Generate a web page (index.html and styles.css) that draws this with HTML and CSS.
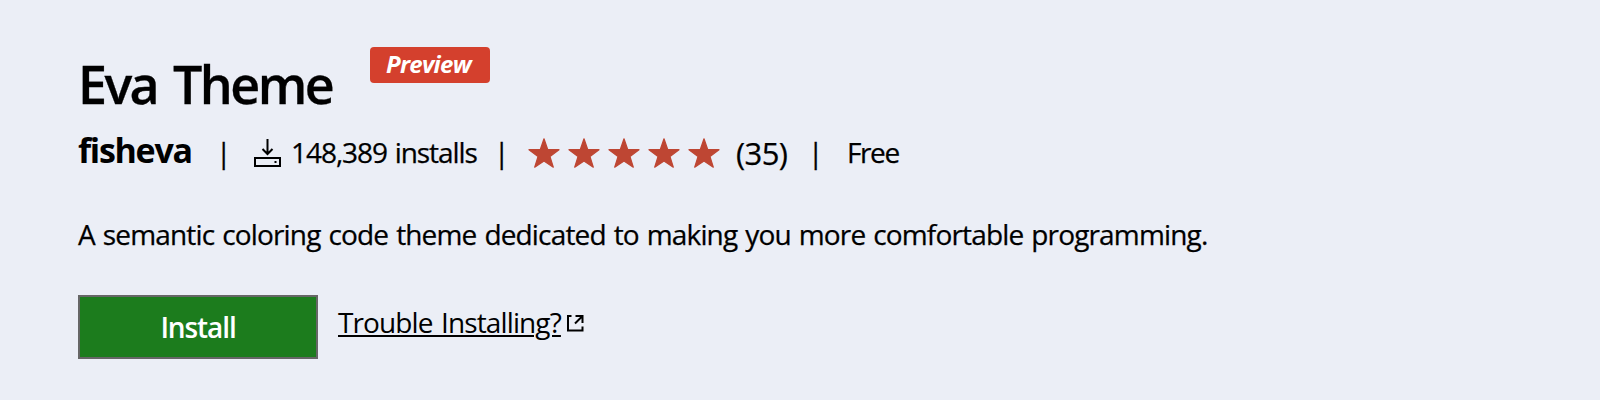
FILE: index.html
```
<!DOCTYPE html>
<html lang="en">
<head>
<meta charset="utf-8">
<title>Eva Theme</title>
<link rel="stylesheet" href="styles.css">
</head>
<body>
<svg width="0" height="0" class="defs"><symbol id="star" viewBox="0 0 32 30"><path d="M16 .8 19.7 11.5 31 11.7 22 18.6 25.3 29.2 16 22.9 6.7 29.2 10 18.6 1 11.7 12.3 11.5Z" fill="#be4633" stroke="#be4633" stroke-width="1.2" stroke-linejoin="round"/></symbol></svg>
<main class="header">
  <div class="title-row">
    <h1 class="title">Eva Theme</h1>
    <span class="badge"><span class="badge-text">Preview</span></span>
  </div>
  <div class="meta">
    <span class="publisher">fisheva</span>
    <span class="divider d1">|</span>
    <svg class="download" width="28" height="28" viewBox="0 0 28 28" fill="none" stroke="#000" stroke-width="2"><path d="M13.5 0V15M8.5 10 13.5 15 18.5 10"/><path d="M1 19H26V27H1Z"/><path d="M20.5 23H22.5"/></svg>
    <span class="installs">148,389 installs</span>
    <span class="divider d2">|</span>
    <span class="stars">
      <svg class="star"><use href="#star"/></svg>
      <svg class="star"><use href="#star"/></svg>
      <svg class="star"><use href="#star"/></svg>
      <svg class="star"><use href="#star"/></svg>
      <svg class="star"><use href="#star"/></svg>
    </span>
    <span class="count">(35)</span>
    <span class="divider d3">|</span>
    <span class="price">Free</span>
  </div>
  <p class="description">A semantic coloring code theme dedicated to making you more comfortable programming.</p>
  <div class="actions">
    <button class="install"><span class="install-text">Install</span></button>
    <a class="help"><span class="help-text">Trouble Installing?</span><svg class="external" width="17" height="17" viewBox="0 0 17 17" fill="none" stroke="#000" stroke-width="2"><path d="M4.5 1H1V15.5H15.5V11.5M8.5 1H15.5V8M15.5 1 8 8.5"/></svg></a>
  </div>
</main>
</body>
</html>
```
FILE: styles.css
```
* { box-sizing: border-box; }
body {
  margin: 0;
  height: 400px;
  overflow: hidden;
  background: #ebeef6;
  color: #000;
  font-family: "Open Sans", "Noto Sans", sans-serif;
  font-size: 28px;
}
.defs { display: block; }
.header { padding: 47px 0 0 78px; white-space: nowrap; }
.title-row { display: flex; height: 78px; }
.title {
  margin: 0;
  width: 292px;
  font-size: 52px;
  font-weight: 600;
  line-height: 73px;
  letter-spacing: -2.6px;
  word-spacing: 5px;
  -webkit-text-stroke: 0.3px #000;
}
.badge {
  display: flex;
  width: 120px;
  height: 36px;
  padding-left: 16px;
  border-radius: 4px;
  background: #d4402d;
  color: #fff;
  font-size: 24px;
  font-weight: 700;
  font-style: italic;
  line-height: 34px;
  letter-spacing: -0.7px;
}
.meta { display: flex; height: 56px; line-height: 54px; }
.publisher { width: 138px; font-size: 34px; font-weight: 700; line-height: 50px; letter-spacing: -1.3px; }
.divider { font-size: 28px; width: 38px; -webkit-text-stroke: 0.3px #000; }
.download { margin-top: 14px; flex: none; }
.installs { width: 213px; margin-left: 9px; letter-spacing: -1.05px; word-spacing: 1.5px; -webkit-text-stroke: 0.25px #000; }
.divider.d2 { width: 34px; margin-left: -10px; }
.stars { display: flex; gap: 8px; padding-top: 13px; }
.star { width: 32px; height: 30px; flex: none; }
.count { width: 72px; margin-left: 16px; font-size: 31px; line-height: 56px; letter-spacing: -0.6px; }
.price { margin-left: 1px; letter-spacing: -1.4px; }
.description { margin: 33px 0 0; line-height: 40px; letter-spacing: -0.84px; word-spacing: 1.5px; }
.count, .price, .description { -webkit-text-stroke: 0.25px #000; }
.actions { display: flex; margin-top: 41px; }
.install {
  width: 240px;
  height: 64px;
  padding: 0;
  border: 2px solid #666;
  background: #1c7c1d;
  color: #fff;
  font: 600 28px/60px "Open Sans", "Noto Sans", sans-serif;
  letter-spacing: -1.1px;
}
.help { display: flex; margin-left: 20px; color: #000; line-height: 55px; }
.help-text {
  letter-spacing: -0.88px;
  word-spacing: 2px;
  text-decoration: underline;
  text-decoration-thickness: 2px;
  text-underline-offset: 2px;
}
.external { margin: 20px 0 0 6px; }
```
